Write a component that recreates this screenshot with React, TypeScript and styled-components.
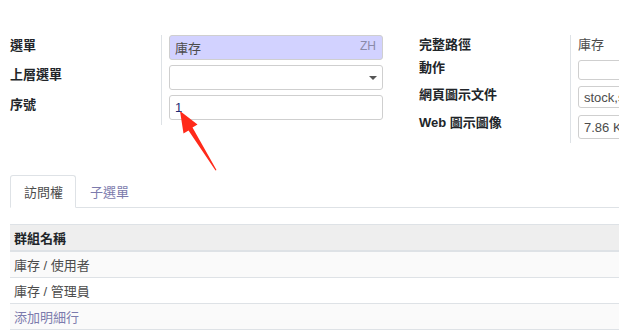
import React from "react";
import styled, { createGlobalStyle } from "styled-components";

const GlobalStyle = createGlobalStyle`
  html, body { margin: 0; padding: 0; background: #fff; }
  body {
    font-family: "Liberation Sans", "Noto Sans CJK TC", sans-serif;
    font-size: 13px;
    color: #212529;
    overflow: hidden;
  }
`;

const Sheet = styled.div`
  position: relative;
  width: 619px;
  height: 330px;
  overflow: hidden;
  padding: 35px 0 0 10px;
  box-sizing: border-box;
`;

const Groups = styled.div`
  display: flex;
  gap: 36px;
  align-items: flex-start;
`;

const Group = styled.div<{ $w: number }>`
  display: flex;
  flex-direction: column;
  width: ${(p) => p.$w}px;
  flex: none;
`;

const Row = styled.div<{ $h: number }>`
  display: flex;
  height: ${(p) => p.$h}px;
  align-items: stretch;
`;

const Label = styled.div<{ $pt?: number }>`
  width: 151px;
  flex: none;
  font-weight: bold;
  line-height: 20px;
  padding-top: ${(p) => p.$pt || 0}px;
  box-sizing: border-box;
  display: flex;
  align-items: flex-start;
`;

const FieldCell = styled.div<{ $pt?: number }>`
  flex: 1;
  border-left: 1px solid #dee2e6;
  padding-left: 7px;
  padding-top: ${(p) => p.$pt || 0}px;
  display: flex;
  align-items: flex-start;
  min-width: 0;
`;

const Input = styled.div<{ $h: number; $bg?: string; $w?: number }>`
  box-sizing: border-box;
  height: ${(p) => p.$h}px;
  width: ${(p) => (p.$w ? p.$w + "px" : "100%")};
  flex: none;
  background: ${(p) => p.$bg || "#fff"};
  border: 1px solid #cfcfcf;
  border-radius: 3px;
  display: flex;
  align-items: center;
  justify-content: space-between;
  padding: 0 6px 0 5px;
  color: #4c4c4c;
  font-size: 13px;
  white-space: nowrap;
  overflow: hidden;
`;

const Lang = styled.span`
  color: #8a8aa8;
  font-size: 12px;
  margin-top: -3px;
`;

const Caret = styled.span`
  width: 0;
  height: 0;
  border-left: 4px solid transparent;
  border-right: 4px solid transparent;
  border-top: 4px solid #555;
  margin-right: -1px;
`;

const Seq = styled.span`
  color: #1d2a74;
`;

const Value = styled.span`
  color: #4c4c4c;
  line-height: 20px;
`;

const TabNav = styled.div`
  display: flex;
  margin-top: 32px;
  border-bottom: 1px solid #dee2e6;
  height: 32px;
`;

const Tab = styled.div<{ $active?: boolean }>`
  box-sizing: border-box;
  height: 33px;
  padding: 0 12px 0 13px;
  display: flex;
  align-items: center;
  color: ${(p) => (p.$active ? "#4c4c4c" : "#7c7bad")};
  border: 1px solid ${(p) => (p.$active ? "#dee2e6" : "transparent")};
  border-bottom-color: ${(p) => (p.$active ? "#fff" : "transparent")};
  border-radius: 3px 3px 0 0;
  background: ${(p) => (p.$active ? "#fff" : "transparent")};
`;

const Table = styled.div`
  margin-top: 16px;
  display: flex;
  flex-direction: column;
`;

const HeadRow = styled.div`
  height: 28px;
  box-sizing: border-box;
  background: #eeeeee;
  border-top: 1px solid #dee2e6;
  border-bottom: 2px solid #dee2e6;
  display: flex;
  align-items: center;
  padding-left: 4px;
  font-weight: bold;
  color: #212529;
`;

const BodyRow = styled.div<{ $striped?: boolean; $link?: boolean }>`
  height: 26px;
  box-sizing: border-box;
  background: ${(p) => (p.$striped ? "#fafafa" : "#fff")};
  border-bottom: 1px solid #dee2e6;
  display: flex;
  align-items: center;
  padding-left: 4px;
  color: ${(p) => (p.$link ? "#7c7bad" : "#4c4c4c")};
`;

const Arrow = styled.svg`
  position: absolute;
  left: 0;
  top: 0;
  pointer-events: none;
`;

export default function App() {
  return (
    <>
      <GlobalStyle />
      <Sheet>
        <Groups>
          <Group $w={373}>
            <Row $h={30}>
              <Label $pt={1}>選單</Label>
              <FieldCell>
                <Input $h={25} $bg="#d2d2ff">
                  <span>庫存</span>
                  <Lang>ZH</Lang>
                </Input>
              </FieldCell>
            </Row>
            <Row $h={30}>
              <Label $pt={0}>上層選單</Label>
              <FieldCell>
                <Input $h={25}>
                  <span />
                  <Caret />
                </Input>
              </FieldCell>
            </Row>
            <Row $h={30}>
              <Label $pt={0}>序號</Label>
              <FieldCell>
                <Input $h={25}>
                  <Seq>1</Seq>
                </Input>
              </FieldCell>
            </Row>
          </Group>
          <Group $w={200}>
            <Row $h={23}>
              <Label>完整路徑</Label>
              <FieldCell>
                <Value>庫存</Value>
              </FieldCell>
            </Row>
            <Row $h={26}>
              <Label>動作</Label>
              <FieldCell $pt={2}>
                <Input $h={20} $w={150} />
              </FieldCell>
            </Row>
            <Row $h={28}>
              <Label $pt={1}>網頁圖示文件</Label>
              <FieldCell $pt={2}>
                <Input $h={22} $w={150}>stock,static/description/icon.png</Input>
              </FieldCell>
            </Row>
            <Row $h={31}>
              <Label $pt={1}>Web 圖示圖像</Label>
              <FieldCell $pt={3}>
                <Input $h={24} $w={150}>7.86 Kb</Input>
              </FieldCell>
            </Row>
          </Group>
        </Groups>
        <TabNav>
          <Tab $active>訪問權</Tab>
          <Tab>子選單</Tab>
        </TabNav>
        <Table>
          <HeadRow>群組名稱</HeadRow>
          <BodyRow $striped>庫存 / 使用者</BodyRow>
          <BodyRow>庫存 / 管理員</BodyRow>
          <BodyRow $striped $link>添加明細行</BodyRow>
        </Table>
        <Arrow width="619" height="330" viewBox="0 0 619 330">
          <polygon
            points="180,111 197.5,124.5 192.5,127.5 216.5,170 215.5,170.5 188.5,130.5 183.5,133.5"
            fill="#ff2a1a"
          />
        </Arrow>
      </Sheet>
    </>
  );
}
